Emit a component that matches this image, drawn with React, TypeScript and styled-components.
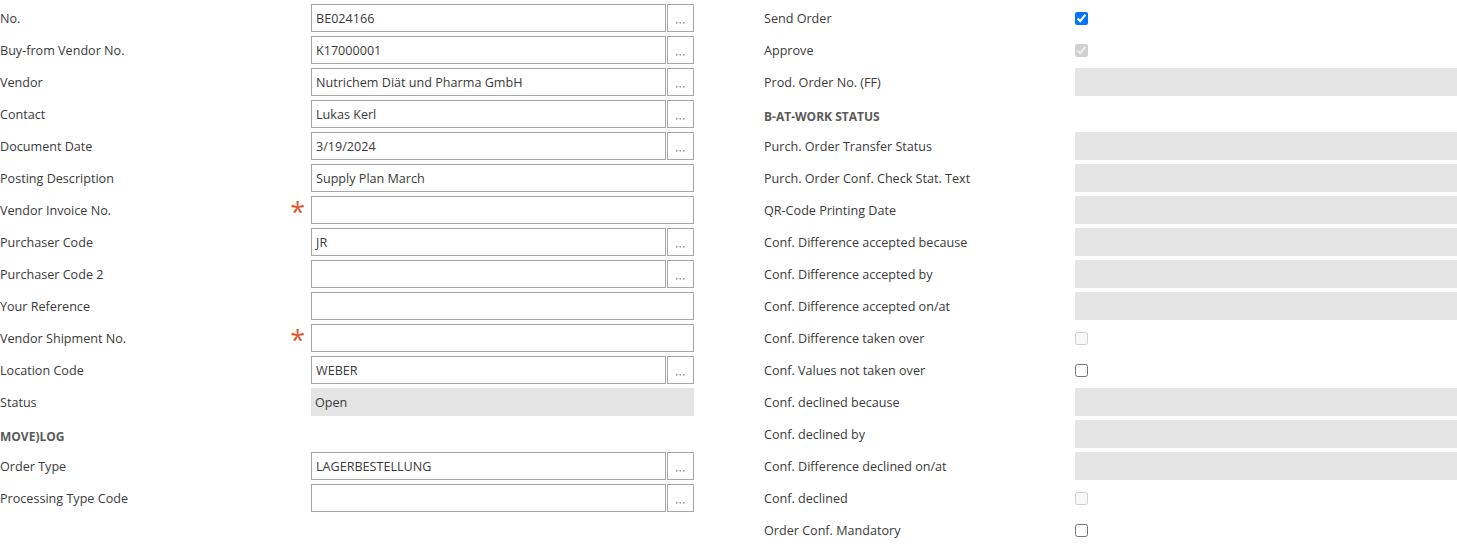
import React from 'react'
import styled, { createGlobalStyle } from 'styled-components'

type Field = {
  label: string
  kind: 'lookup' | 'text' | 'readonly' | 'header' | 'check'
  value?: string
  required?: boolean
  checked?: boolean
  disabled?: boolean
}

const leftFields: Field[] = [
  { label: 'No.', kind: 'lookup', value: 'BE024166' },
  { label: 'Buy-from Vendor No.', kind: 'lookup', value: 'K17000001' },
  { label: 'Vendor', kind: 'lookup', value: 'Nutrichem Diät und Pharma GmbH' },
  { label: 'Contact', kind: 'lookup', value: 'Lukas Kerl' },
  { label: 'Document Date', kind: 'lookup', value: '3/19/2024' },
  { label: 'Posting Description', kind: 'text', value: 'Supply Plan March' },
  { label: 'Vendor Invoice No.', kind: 'text', value: '', required: true },
  { label: 'Purchaser Code', kind: 'lookup', value: 'JR' },
  { label: 'Purchaser Code 2', kind: 'lookup', value: '' },
  { label: 'Your Reference', kind: 'text', value: '' },
  { label: 'Vendor Shipment No.', kind: 'text', value: '', required: true },
  { label: 'Location Code', kind: 'lookup', value: 'WEBER' },
  { label: 'Status', kind: 'readonly', value: 'Open' },
  { label: 'MOVE)LOG', kind: 'header' },
  { label: 'Order Type', kind: 'lookup', value: 'LAGERBESTELLUNG' },
  { label: 'Processing Type Code', kind: 'lookup', value: '' },
]

const rightFields: Field[] = [
  { label: 'Send Order', kind: 'check', checked: true },
  { label: 'Approve', kind: 'check', checked: true, disabled: true },
  { label: 'Prod. Order No. (FF)', kind: 'readonly', value: '' },
  { label: 'B-AT-WORK STATUS', kind: 'header' },
  { label: 'Purch. Order Transfer Status', kind: 'readonly', value: '' },
  { label: 'Purch. Order Conf. Check Stat. Text', kind: 'readonly', value: '' },
  { label: 'QR-Code Printing Date', kind: 'readonly', value: '' },
  { label: 'Conf. Difference accepted because', kind: 'readonly', value: '' },
  { label: 'Conf. Difference accepted by', kind: 'readonly', value: '' },
  { label: 'Conf. Difference accepted on/at', kind: 'readonly', value: '' },
  { label: 'Conf. Difference taken over', kind: 'check', disabled: true },
  { label: 'Conf. Values not taken over', kind: 'check' },
  { label: 'Conf. declined because', kind: 'readonly', value: '' },
  { label: 'Conf. declined by', kind: 'readonly', value: '' },
  { label: 'Conf. Difference declined on/at', kind: 'readonly', value: '' },
  { label: 'Conf. declined', kind: 'check', disabled: true },
  { label: 'Order Conf. Mandatory', kind: 'check' },
]

const GlobalStyle = createGlobalStyle`
  body {
    margin: 0;
    background: #fff;
    font-family: "Open Sans", "Noto Sans", sans-serif;
    font-size: 12.6px;
    color: #3a3a3a;
  }
`

const Page = styled.div`
  display: grid;
  grid-template-columns: 694px 1fr;
  column-gap: 70px;
  padding-top: 2px;
`

const Column = styled.div`
  display: flex;
  flex-direction: column;
`

const Row = styled.div`
  display: grid;
  grid-template-columns: 311px 1fr;
  height: 32px;
  align-items: center;
`

const Label = styled.div`
  display: flex;
  align-items: center;
  justify-content: space-between;
  height: 32px;
  white-space: nowrap;
`

const Header = styled.div`
  font-weight: 700;
  color: #5a5a5a;
  font-size: 12px;
  padding-top: 4px;
`

const Required = styled.span`
  display: block;
  color: #e0592f;
  font-size: 27px;
  height: 20px;
  line-height: 26px;
  margin-right: 6px;
  transform: translateY(-1px);
`

const Control = styled.div`
  display: flex;
  height: 28px;
  gap: 1px;
`

const Box = styled.div<{ $readonly?: boolean }>`
  flex: 1;
  box-sizing: border-box;
  height: 28px;
  display: flex;
  align-items: center;
  padding-left: 4px;
  border: ${p => (p.$readonly ? 'none' : '1px solid #a6a6a6')};
  background: ${p => (p.$readonly ? '#e5e5e5' : '#fff')};
  white-space: nowrap;
  overflow: hidden;
`

const LookupButton = styled.div`
  width: 27px;
  box-sizing: border-box;
  height: 28px;
  border: 1px solid #a6a6a6;
  display: flex;
  align-items: flex-end;
  justify-content: center;
  padding-bottom: 7px;
`

const CheckCell = styled.div`
  display: flex;
  align-items: center;
  height: 28px;
`

const Check = styled.input`
  margin: 0;
  width: 13px;
  height: 13px;
`

const Ellipsis = () => (
  <svg width="9" height="2" viewBox="0 0 9 2">
    <rect x="0" y="0" width="1.5" height="1.5" fill="#8a8a8a" />
    <rect x="3.5" y="0" width="1.5" height="1.5" fill="#8a8a8a" />
    <rect x="7" y="0" width="1.5" height="1.5" fill="#8a8a8a" />
  </svg>
)

function FieldRow({ f }: { f: Field }) {
  if (f.kind === 'header') {
    return (
      <Row>
        <Header>{f.label}</Header>
      </Row>
    )
  }
  return (
    <Row>
      <Label>
        <span>{f.label}</span>
        {f.required && <Required>*</Required>}
      </Label>
      {f.kind === 'check' ? (
        <CheckCell>
          <Check type="checkbox" defaultChecked={f.checked} disabled={f.disabled} />
        </CheckCell>
      ) : (
        <Control>
          <Box $readonly={f.kind === 'readonly'}>{f.value}</Box>
          {f.kind === 'lookup' && (
            <LookupButton>
              <Ellipsis />
            </LookupButton>
          )}
        </Control>
      )}
    </Row>
  )
}

export default function App() {
  return (
    <>
      <GlobalStyle />
      <Page>
        <Column>
          {leftFields.map(f => (
            <FieldRow key={f.label} f={f} />
          ))}
        </Column>
        <Column>
          {rightFields.map(f => (
            <FieldRow key={f.label} f={f} />
          ))}
        </Column>
      </Page>
    </>
  )
}
